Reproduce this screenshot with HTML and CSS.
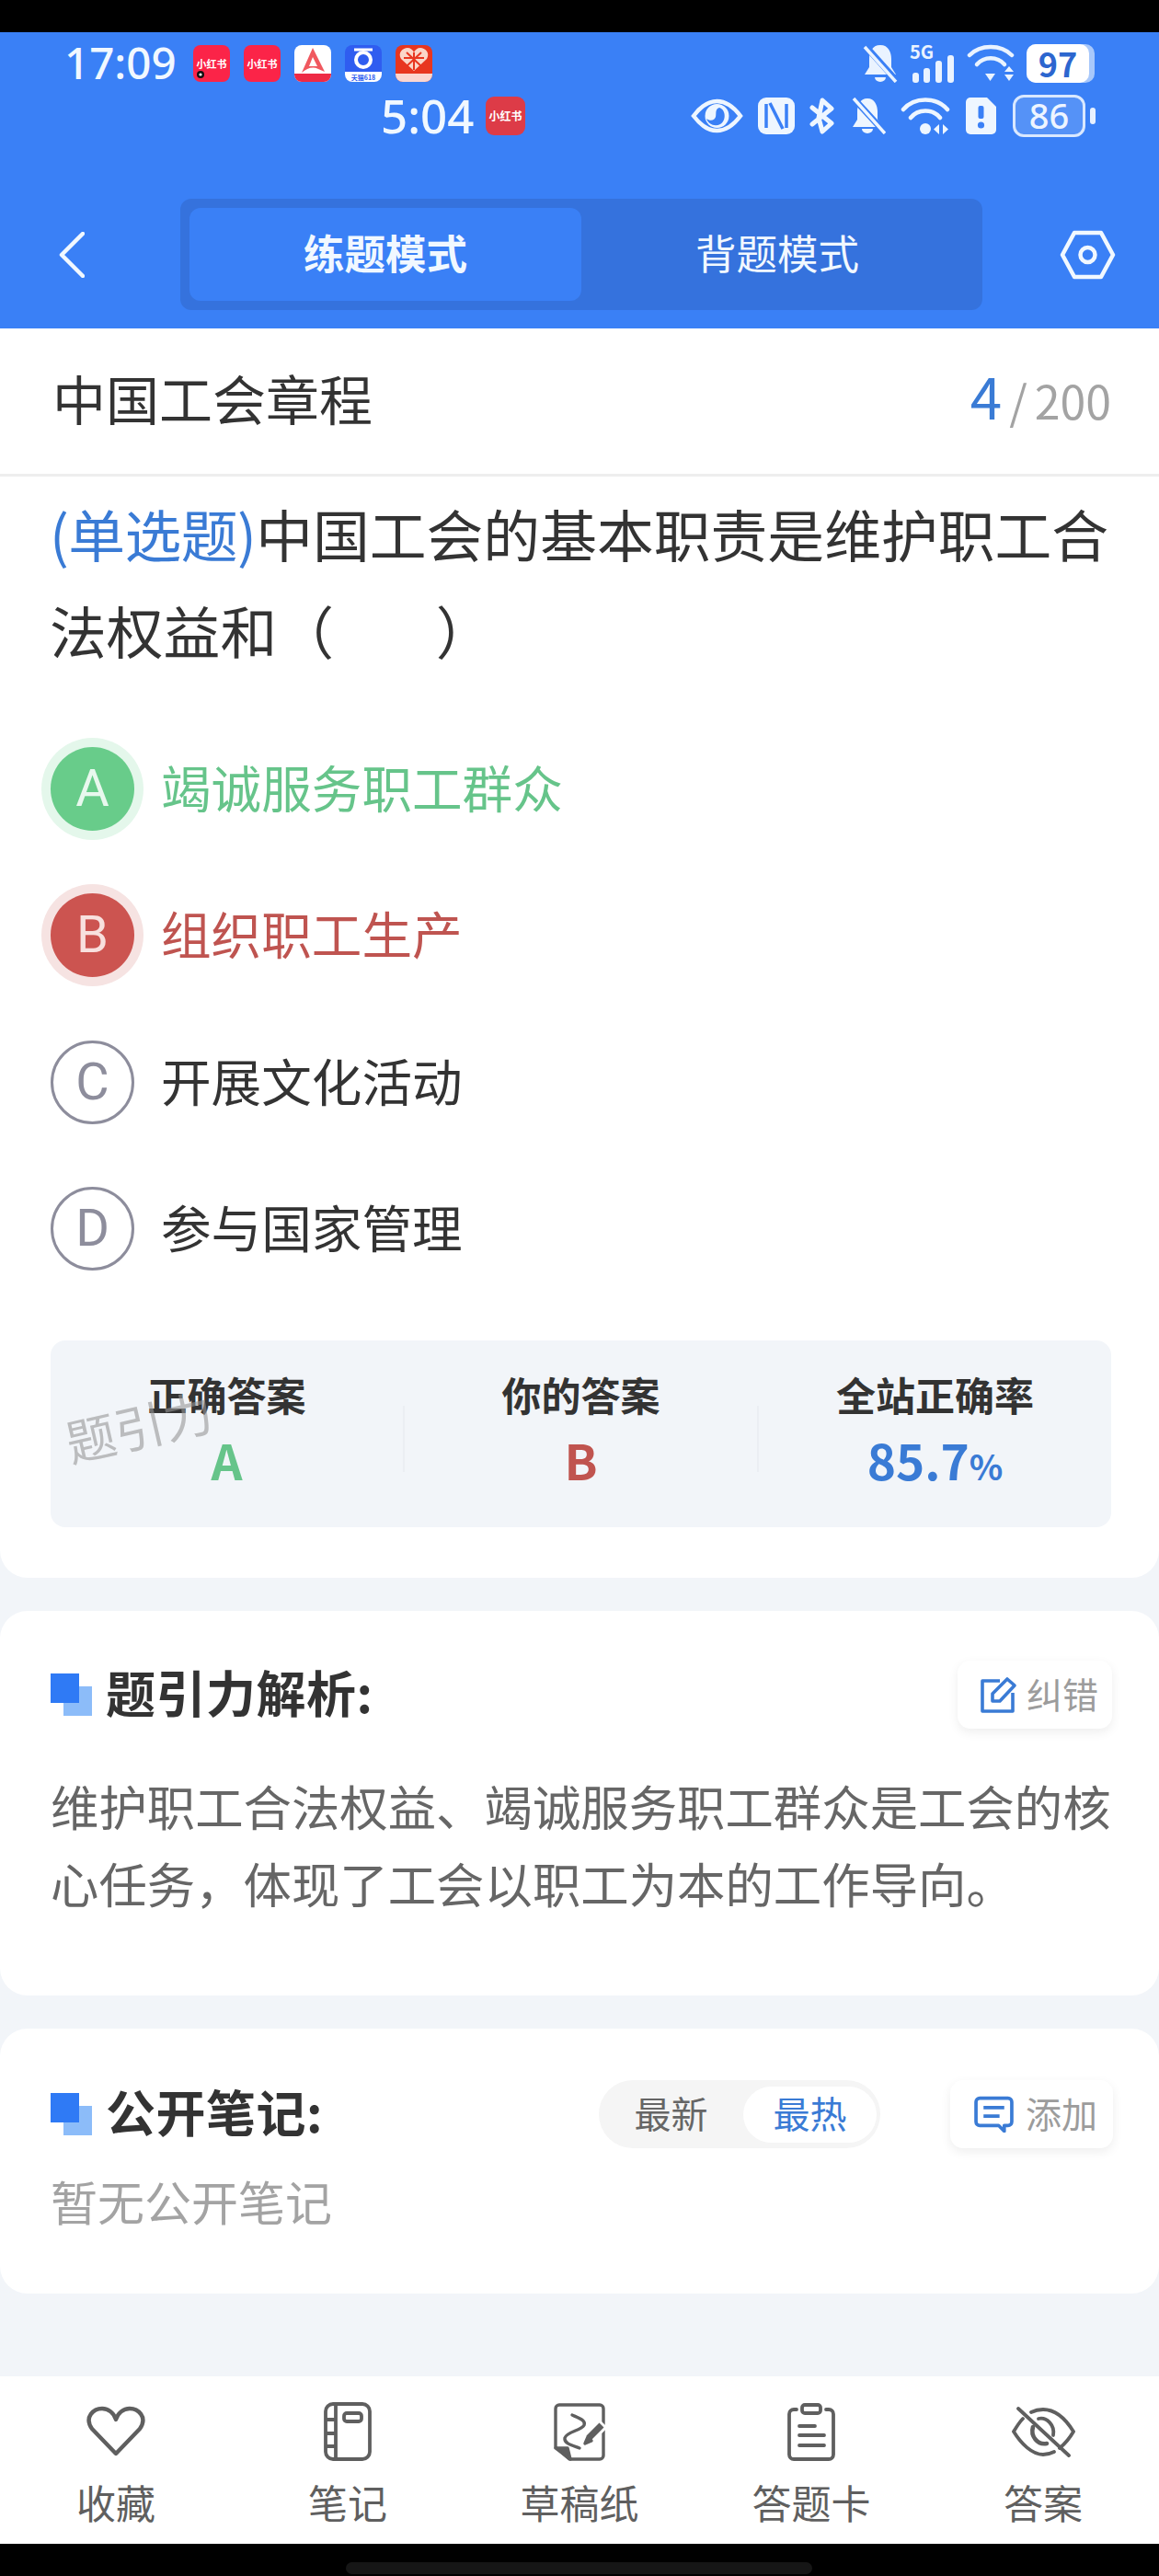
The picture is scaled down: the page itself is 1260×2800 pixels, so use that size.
FILE: index.html
```html
<!DOCTYPE html>
<html lang="zh-CN">
<head>
    <meta charset="UTF-8">
    <meta name="viewport" content="width=device-width, initial-scale=1.0">
    <title>练题模式 - 中国工会章程</title>
    <link rel="stylesheet" href="styles.css">
</head>
<body>
<div class="phone">
    <div class="black-top"></div>

    <header class="header">
        <div class="status status-one">
            <span class="time">17:09</span>
            <div class="apps">
                <svg class="app" viewBox="0 0 40 40"><rect width="40" height="40" rx="8" fill="#fb2448"/><text x="20" y="25" class="app-txt" text-anchor="middle">小红书</text><circle cx="8" cy="32" r="4" fill="#111"/><circle cx="8" cy="32" r="1.6" fill="#fff"/></svg>
                <svg class="app" viewBox="0 0 40 40"><rect width="40" height="40" rx="8" fill="#fb2448"/><text x="20" y="25" class="app-txt" text-anchor="middle">小红书</text></svg>
                <svg class="app" viewBox="0 0 40 40"><rect width="40" height="40" rx="8" fill="#fff"/><path d="M20 3 L33 29 L26 26 C20 23 14 25 8 30Z" fill="#f0585f"/><path d="M20 13 L25 23 L16 23Z" fill="#fff"/><path d="M0 31 H40 V32 A8 8 0 0 1 32 40 H8 A8 8 0 0 1 0 32Z" fill="#ee2a45"/></svg>
                <svg class="app" viewBox="0 0 40 40"><rect width="40" height="40" rx="8" fill="#2f5df0"/><circle cx="20" cy="16" r="8" fill="none" stroke="#fff" stroke-width="4"/><path d="M10 5 H30" stroke="#fff" stroke-width="3"/><path d="M0 29 H40 V32 A8 8 0 0 1 32 40 H8 A8 8 0 0 1 0 32Z" fill="#fff"/><text x="20" y="38" class="app-tiny" text-anchor="middle">天猫618</text></svg>
                <svg class="app" viewBox="0 0 40 40"><rect width="40" height="40" rx="8" fill="#e8361f"/><path d="M20 28 L6 15 C2 8 8 3 13 3 C16 3 19 5 20 8 C21 5 24 3 27 3 C32 3 38 8 34 15Z" fill="#fbd6c8"/><path d="M20 8 V27 M9 14 H31 M12 8 L28 23 M28 8 L12 23" stroke="#e8361f" stroke-width="2"/><path d="M0 31 H40 V32 A8 8 0 0 1 32 40 H8 A8 8 0 0 1 0 32Z" fill="#fbd6d0"/></svg>
            </div>
            <div class="sys-icons sys-one">
                <svg class="ic-bell" viewBox="0 0 38 42"><path d="M19 1 C10 1 7 9 7 16 V25 L2 33 H36 L31 25 V16 C31 9 28 1 19 1Z" fill="#eaf3ff"/><path d="M13 36 A6 5 0 0 0 25 36Z" fill="#eaf3ff"/><path d="M1 0 L37 40" stroke="#3a80f6" stroke-width="7"/><path d="M2 3 L36 41" stroke="#eaf3ff" stroke-width="3.5"/></svg>
                <div class="sig">
                    <span class="sig-txt">5G</span>
                    <svg class="ic-sig" viewBox="0 0 49 30"><rect x="3" y="19" width="7" height="11" rx="3" fill="#eaf3ff"/><rect x="15" y="14" width="7" height="16" rx="3" fill="#eaf3ff"/><rect x="28" y="6" width="7" height="24" rx="3" fill="#eaf3ff"/><rect x="41" y="0" width="7" height="30" rx="3" fill="#eaf3ff"/></svg>
                </div>
                <svg class="ic-wifi" viewBox="0 0 52 43" fill="none" stroke="#eaf3ff" stroke-width="4.5" stroke-linecap="round"><path d="M3 13 C15 1 37 1 49 13"/><path d="M11 23 C19 14 33 14 41 23"/><path d="M20 33 H31 L25.5 41Z" fill="#eaf3ff" stroke="none"/><path d="M41 31 L46 25 L51 31Z M41 34 H51 L46 41Z" fill="#eaf3ff" stroke="none"/></svg>
                <div class="batt-solid"><span class="batt-solid-num">97</span></div>
            </div>
        </div>
        <div class="status status-two">
            <span class="time-two">5:04</span>
            <svg class="app-two" viewBox="0 0 43 42"><rect width="43" height="42" rx="9" fill="#dd3b47"/><text x="21.5" y="26" class="app-txt app-txt-two" text-anchor="middle">小红书</text></svg>
            <div class="sys-icons sys-two">
                <svg class="ic-eye" viewBox="0 0 57 38"><path d="M3 19 C12 7 20 3 28.5 3 C37 3 45 7 54 19 C45 31 37 35 28.5 35 C20 35 12 31 3 19Z" fill="none" stroke="#eef6ff" stroke-width="4.5"/><circle cx="28.5" cy="19" r="13" fill="#eef6ff"/><path d="M31 10 C38 12 39 24 32 28 C26 31 19 28 17 22 C21 25 26 24 27 20 C28 16 26 12 31 10Z" fill="#3a80f6"/></svg>
                <svg class="ic-nfc" viewBox="0 0 40 40"><rect width="40" height="40" rx="9" fill="#eef6ff"/><path d="M9 7 V33 M31 7 V33 M13 6 L27 34" stroke="#3a80f6" stroke-width="3.5" fill="none"/></svg>
                <svg class="ic-bt" viewBox="0 0 28 40" fill="none" stroke="#eef6ff" stroke-width="5" stroke-linecap="round" stroke-linejoin="round"><path d="M3 11 L24 28 L14 37 L10 22 L14 3 L24 12 L3 29"/></svg>
                <svg class="ic-bell-two" viewBox="0 0 39 40"><path d="M19 1 C11 1 8 9 8 15 V24 L3 32 H35 L30 24 V15 C30 9 27 1 19 1Z" fill="#eef6ff"/><path d="M13 34 A6 5 0 0 0 25 34Z" fill="#eef6ff"/><path d="M3 0 L38 38" stroke="#3a80f6" stroke-width="7"/><path d="M4 1 L38 39" stroke="#eef6ff" stroke-width="3.5"/></svg>
                <svg class="ic-wifi-two" viewBox="0 0 55 42" fill="none" stroke="#eef6ff" stroke-width="4.5" stroke-linecap="round"><path d="M3 14 C15 0 39 0 51 14"/><path d="M11 23 C19 13 35 13 43 23"/><circle cx="27" cy="35" r="6" fill="#eef6ff" stroke="none"/><path d="M42 30 V41 L36 35.5Z M46 30 V41 L52 35.5Z" fill="#eef6ff" stroke="none"/></svg>
                <svg class="ic-sim" viewBox="0 0 33 40"><path d="M5 0 H23 L33 10 V35 A5 5 0 0 1 28 40 H5 A5 5 0 0 1 0 35 V5 A5 5 0 0 1 5 0Z" fill="#eef6ff"/><rect x="13.5" y="9" width="6" height="14" rx="2" fill="#3a80f6"/><circle cx="16.5" cy="30" r="3.6" fill="#3a80f6"/></svg>
                <div class="batt-line"><span class="batt-line-box">86</span><span class="batt-cap"></span></div>
            </div>
        </div>
        <nav class="nav">
            <svg class="back" viewBox="0 0 28 50" fill="none" stroke="#f1f8ff" stroke-width="4.5" stroke-linecap="round" stroke-linejoin="round"><path d="M26 2 L3 25 L26 48"/></svg>
            <div class="tabs">
                <div class="tab tab-on">练题模式</div>
                <div class="tab">背题模式</div>
            </div>
            <svg class="hex" viewBox="0 0 61 54" fill="none" stroke="#f1f8ff" stroke-width="4.5" stroke-linejoin="round"><path d="M16 3 H45 L58 27 L45 51 H16 L3 27Z"/><circle cx="30.5" cy="27" r="8"/></svg>
        </nav>
    </header>

    <section class="card card-main">
        <div class="title-row">
            <span class="title">中国工会章程</span>
            <span class="count"><b class="count-now">4</b><i class="count-sep">/</i>200</span>
        </div>
        <p class="question"><span class="q-type">(单选题)</span>中国工会的基本职责是维护职工合<br>法权益和（&nbsp;&nbsp;&nbsp;&nbsp;&nbsp;&nbsp;&nbsp;&nbsp;）</p>

        <ul class="options">
            <li class="option option-right"><span class="letter">A</span><span class="opt-text">竭诚服务职工群众</span></li>
            <li class="option option-wrong"><span class="letter">B</span><span class="opt-text">组织职工生产</span></li>
            <li class="option"><span class="letter">C</span><span class="opt-text">开展文化活动</span></li>
            <li class="option"><span class="letter">D</span><span class="opt-text">参与国家管理</span></li>
        </ul>

        <div class="answer-box">
            <div class="ans-col">
                <div class="ans-label">正确答案</div>
                <div class="ans-value ans-green">A</div>
            </div>
            <span class="ans-sep"></span>
            <div class="ans-col">
                <div class="ans-label">你的答案</div>
                <div class="ans-value ans-red">B</div>
            </div>
            <span class="ans-sep"></span>
            <div class="ans-col">
                <div class="ans-label">全站正确率</div>
                <div class="ans-value ans-blue">85.7<small class="pct">%</small></div>
            </div>
            <span class="watermark">题引力</span>
        </div>
    </section>

    <section class="card card-analysis">
        <div class="card-head">
            <span class="squares"><i class="sq-light"></i><i class="sq-dark"></i></span>
            <h3 class="card-title">题引力解析:</h3>
            <div class="mini-btn mini-right">
                <svg class="mini-ic" viewBox="0 0 40 40" fill="none" stroke="#3a7bd5" stroke-width="3.6" stroke-linejoin="round"><path d="M21 5 H2 V38 H35 V18"/><path d="M13 27 V19 L29 3 L37 10 L21 27Z"/></svg>
                <span class="mini-txt">纠错</span>
            </div>
        </div>
        <p class="analysis-txt">维护职工合法权益、竭诚服务职工群众是工会的核心任务，体现了工会以职工为本的工作导向。</p>
    </section>

    <section class="card card-notes">
        <div class="card-head">
            <span class="squares"><i class="sq-light"></i><i class="sq-dark"></i></span>
            <h3 class="card-title">公开笔记:</h3>
            <div class="toggle">
                <span class="toggle-item">最新</span>
                <span class="toggle-item toggle-on">最热</span>
            </div>
            <div class="mini-btn mini-add">
                <svg class="mini-ic mini-ic-wide" viewBox="0 0 42 38" fill="none" stroke="#3a7bd5" stroke-width="3.6" stroke-linejoin="round"><path d="M6 2 H36 A4 4 0 0 1 40 6 V27 A4 4 0 0 1 36 31 H32 V37 L26 31 H6 A4 4 0 0 1 2 27 V6 A4 4 0 0 1 6 2Z"/><path d="M10 12 H32 M10 21 H27"/></svg>
                <span class="mini-txt">添加</span>
            </div>
        </div>
        <p class="empty">暂无公开笔记</p>
    </section>

    <div class="spacer"></div>

    <footer class="tabbar">
        <div class="bar-item">
            <div class="bar-ic"><svg class="ic-heart" viewBox="0 0 64 56" fill="none" stroke="#5f5f5f" stroke-width="4.4" stroke-linejoin="round"><path d="M32 52 L6 25 C-3 12 8 3 17 3 C24 3 30 8 32 15 C34 8 40 3 47 3 C56 3 67 12 58 25Z"/></svg></div>
            <span class="bar-label">收藏</span>
        </div>
        <div class="bar-item">
            <div class="bar-ic"><svg class="ic-book" viewBox="0 0 52 64" fill="none" stroke="#5f5f5f" stroke-width="3.8"><rect x="2" y="2" width="48" height="60" rx="8"/><path d="M13 2 V62 M2 19 H13 M2 34 H13 M2 48 H13"/><rect x="22" y="12" width="19" height="9" rx="3"/></svg></div>
            <span class="bar-label">笔记</span>
        </div>
        <div class="bar-item">
            <div class="bar-ic"><svg class="ic-draft" viewBox="0 0 56 63" fill="none" stroke="#5f5f5f" stroke-width="3.4" stroke-linejoin="round" stroke-linecap="round"><path d="M2 48 V6 A4 4 0 0 1 6 2 H50 A4 4 0 0 1 54 6 V57 A4 4 0 0 1 50 61 H17Z"/><path d="M2 49 H15 L18 61Z" fill="#5f5f5f"/><path d="M20 13 C29 17 35 19 33 24 C30 30 14 31 12 38 C11 44 20 46 28 49"/><path d="M54 22 L36 40" stroke="#fff" stroke-width="13" stroke-linecap="butt"/><path d="M52 24 L38 38" stroke-width="7" stroke-linecap="butt"/><path d="M34 44 L37 37 L41 41Z" fill="#5f5f5f"/></svg></div>
            <span class="bar-label">草稿纸</span>
        </div>
        <div class="bar-item">
            <div class="bar-ic"><svg class="ic-card" viewBox="0 0 54 63" fill="none" stroke="#5f5f5f" stroke-width="3.8" stroke-linecap="round"><path d="M11 7 H8 A5 5 0 0 0 3 12 V56 A5 5 0 0 0 8 61 H46 A5 5 0 0 0 51 56 V12 A5 5 0 0 0 46 7 H43"/><rect x="17" y="2" width="20" height="9" rx="3"/><path d="M14 25 H31 M14 35 H41 M14 46 H41"/></svg></div>
            <span class="bar-label">答题卡</span>
        </div>
        <div class="bar-item">
            <div class="bar-ic"><svg class="ic-eyeoff" viewBox="0 0 69 55" fill="none" stroke="#5f5f5f" stroke-width="3.8" stroke-linecap="round"><path d="M21 6 C25 4 30 3 34 3 C48 3 59 14 67 27 C63 34 58 40 52 45"/><path d="M12 13 C8 17 5 22 2 27 C10 40 22 52 34 52 C38 52 42 51 46 49"/><path d="M7 2 L62 53"/><path d="M29 13 C38 11 47 20 45 31"/><path d="M23 22 C20 32 28 42 38 40" stroke-width="4.6"/></svg></div>
            <span class="bar-label">答案</span>
        </div>
    </footer>

    <div class="black-bottom"><span class="home-pill"></span></div>
</div>
</body>
</html>
```

FILE: styles.css
```css
* {
    box-sizing: border-box;
}
body {
    margin: 0;
    font-family: "Noto Sans CJK SC", "Noto Sans", sans-serif;
    color: #333;
}
p, h3, ul {
    margin: 0;
    padding: 0;
}
.phone {
    position: relative;
    width: 1260px;
    height: 2800px;
    display: flex;
    flex-direction: column;
    background-color: #f2f5f9;
    overflow: hidden;
}
.black-top {
    height: 35px;
    background-color: #000;
}

/* blue header */
.header {
    height: 322px;
    padding-top: 12px;
    background-color: #3a80f6;
    color: #f1f8ff;
}
.status {
    display: flex;
    align-items: center;
}
.status-one {
    height: 43px;
    padding: 0 70px;
}
.status-two {
    height: 46px;
    margin-top: 13px;
    padding: 0 69px 0 414px;
}
.time {
    font-family: "Noto Sans", sans-serif;
    font-size: 47.5px;
    font-weight: 500;
    line-height: 43px;
    width: 140px;
    margin-top: -3px;
}
.time-two {
    font-family: "Noto Sans", sans-serif;
    font-size: 51px;
    font-weight: 500;
    line-height: 46px;
    width: 114px;
    margin-top: -3px;
}
.apps {
    display: flex;
    gap: 15px;
}
.app {
    width: 40px;
    height: 40px;
}
.app-two {
    width: 43px;
    height: 42px;
}
.app-txt {
    font-size: 11px;
    font-weight: 700;
    fill: #fff;
}
.app-txt-two {
    font-size: 12px;
}
.app-tiny {
    font-size: 7px;
    font-weight: 700;
    fill: #2f5df0;
}
.sys-icons {
    margin-left: auto;
    display: flex;
    align-items: center;
}
.sys-one {
    gap: 13px;
}
.sys-two {
    gap: 16px;
}
.ic-bell {
    width: 38px;
    height: 42px;
}
.sig {
    width: 49px;
    height: 42px;
    display: flex;
    flex-direction: column;
}
.sig-txt {
    height: 16px;
    font-size: 20px;
    font-weight: 700;
    line-height: 16px;
    color: #eaf3ff;
}
.ic-sig {
    width: 49px;
    height: 30px;
    margin-top: -4px;
}
.ic-wifi {
    width: 52px;
    height: 43px;
}
.batt-solid {
    width: 74px;
    height: 42px;
    border-radius: 10px;
    background-color: #a8c8fb;
}
.batt-solid-num {
    display: block;
    width: 68px;
    height: 42px;
    border-radius: 10px;
    background-color: #fff;
    color: #2c66cf;
    font-size: 36px;
    font-weight: 700;
    line-height: 41px;
    text-align: center;
}
.ic-eye {
    width: 57px;
    height: 38px;
}
.ic-nfc {
    width: 40px;
    height: 40px;
}
.ic-bt {
    width: 28px;
    height: 40px;
}
.ic-bell-two {
    width: 39px;
    height: 40px;
}
.ic-wifi-two {
    width: 55px;
    height: 42px;
}
.ic-sim {
    width: 33px;
    height: 40px;
}
.batt-line {
    display: flex;
    align-items: center;
    gap: 5px;
    margin-left: 2px;
}
.batt-line-box {
    width: 79px;
    height: 46px;
    border: 3px solid #d9e8ff;
    border-radius: 12px;
    background-color: rgba(255, 255, 255, 0.14);
    color: #eef5ff;
    font-family: "Noto Sans", sans-serif;
    font-size: 38px;
    font-weight: 500;
    line-height: 38px;
    text-align: center;
}
.batt-cap {
    width: 6px;
    height: 18px;
    border-radius: 3px;
    background-color: #e8f1ff;
}
.nav {
    display: flex;
    align-items: center;
    margin-top: 67px;
    padding-left: 64px;
}
.back {
    width: 28px;
    height: 50px;
}
.tabs {
    width: 872px;
    height: 121px;
    margin-left: 104px;
    padding: 10px;
    display: flex;
    border-radius: 12px;
    background-color: #3572dd;
}
.tab {
    flex: 1;
    border-radius: 12px;
    font-size: 44.5px;
    line-height: 96px;
    text-align: center;
}
.tab-on {
    background-color: #3a80f6;
    font-weight: 700;
}
.hex {
    width: 61px;
    height: 54px;
    margin-left: 84px;
}

/* cards */
.card {
    background-color: #fff;
    border-radius: 30px;
}
.card-main {
    height: 1358px;
    border-radius: 0 0 30px 30px;
}
.title-row {
    height: 161px;
    padding: 0 52px 9px 57px;
    display: flex;
    align-items: center;
    justify-content: space-between;
    border-bottom: 3px solid #eeeeee;
}
.title {
    font-size: 58px;
}
.count {
    color: #a3a3a3;
    font-size: 50px;
    line-height: 70px;
}
.count-now {
    color: #3a7bd5;
    font-size: 62px;
    font-weight: 400;
}
.count-sep {
    margin: 0 8px;
    font-style: normal;
}
.question {
    margin-top: 9px;
    padding-left: 54px;
    font-size: 61.8px;
    line-height: 105px;
    white-space: nowrap;
}
.q-type {
    color: #3a7bd5;
    letter-spacing: -0.6px;
}
.options {
    margin-top: 41px;
    list-style: none;
}
.option {
    height: 159.3px;
    padding-left: 55px;
    display: flex;
    align-items: center;
    gap: 29px;
    font-size: 54.6px;
}
.opt-text {
    margin-top: -6px;
}
.letter {
    width: 91px;
    height: 91px;
    flex-shrink: 0;
    border: 3px solid #8d8d9c;
    border-radius: 50%;
    color: #8d8d9c;
    font-family: "Roboto", sans-serif;
    font-size: 56px;
    font-weight: 400;
    line-height: 85px;
    text-align: center;
}
.option-right {
    color: #66c48a;
}
.option-right .letter {
    border: none;
    line-height: 91px;
    background-color: #68cc8a;
    color: #e8f8ee;
    box-shadow: 0 0 0 10px #e4f7eb;
}
.option-wrong {
    color: #bf5450;
}
.option-wrong .letter {
    border: none;
    line-height: 91px;
    background-color: #cc5450;
    color: #f8e0de;
    box-shadow: 0 0 0 10px #f6e3e2;
}
.answer-box {
    position: relative;
    width: 1153px;
    height: 203px;
    margin: 42px 0 0 55px;
    display: flex;
    align-items: center;
    border-radius: 16px;
    background-color: #f2f5f9;
}
.ans-col {
    flex: 1;
    text-align: center;
    height: 203px;
    padding-top: 28px;
}
.ans-sep {
    width: 2px;
    height: 72px;
    margin-top: 10px;
    background-color: #ebeef3;
}
.ans-label {
    font-size: 43px;
    font-weight: 700;
    line-height: 60px;
}
.ans-value {
    margin-top: 6px;
    font-size: 53px;
    font-weight: 700;
    line-height: 70px;
}
.ans-green {
    color: #66c48a;
}
.ans-red {
    color: #c0544f;
}
.ans-blue {
    color: #3a7bd5;
}
.pct {
    font-size: 38px;
}
.watermark {
    position: absolute;
    left: 15px;
    top: 57px;
    color: rgba(150, 150, 150, 0.6);
    font-size: 54px;
    line-height: 70px;
    transform: rotate(-13deg);
}
.card-analysis {
    height: 418px;
    margin-top: 36px;
    padding: 54px 51px 0 55px;
}
.card-notes {
    height: 288px;
    margin-top: 36px;
    padding: 56px 50px 0 55px;
}
.card-head {
    height: 74px;
    display: flex;
    align-items: center;
}
.squares {
    position: relative;
    width: 45px;
    height: 46px;
    flex-shrink: 0;
}
.sq-dark, .sq-light {
    position: absolute;
    width: 31px;
    height: 32px;
}
.sq-dark {
    left: 0;
    top: 0;
    background-color: #2f7af5;
}
.sq-light {
    left: 14px;
    top: 14px;
    background-color: #8cbcf9;
}
.card-title {
    margin-left: 15px;
    font-size: 54px;
    font-weight: 700;
    line-height: 68px;
    margin-bottom: 6px;
    letter-spacing: 0.5px;
}
.mini-btn {
    display: flex;
    align-items: center;
    gap: 10px;
    height: 74px;
    border-radius: 14px;
    background-color: #fff;
    box-shadow: 0 4px 12px rgba(0, 0, 0, 0.07);
    color: #9c9c9c;
    font-size: 39px;
}
.mini-txt {
    margin-top: -5px;
}
.mini-right {
    margin-left: auto;
    width: 168px;
    padding-left: 25px;
}
.mini-ic {
    width: 40px;
    height: 40px;
    flex-shrink: 0;
}
.mini-ic-wide {
    width: 43px;
}
.mini-add {
    width: 177px;
    margin-left: 76px;
    padding-left: 26px;
    gap: 13px;
}
.analysis-txt {
    margin-top: 41px;
    color: #666;
    font-size: 52.4px;
    line-height: 84px;
}
.toggle {
    margin-left: auto;
    width: 306px;
    height: 74px;
    padding: 7px 4px 6px 0;
    display: flex;
    border-radius: 37px;
    background-color: #f5f5f5;
    font-size: 40px;
}
.toggle-item {
    flex: 1;
    border-radius: 31px;
    color: #666;
    line-height: 57px;
    text-align: center;
}
.toggle-on {
    flex: none;
    width: 145px;
    background-color: #fff;
    color: #3a7bd5;
}
.empty {
    margin-top: 22px;
    color: #a3a3a3;
    font-size: 51px;
    line-height: 70px;
}

.spacer {
    flex: 1;
}

/* bottom bar */
.tabbar {
    height: 182px;
    display: flex;
    background-color: #fff;
}
.bar-item {
    flex: 1;
    padding-top: 28px;
    display: flex;
    flex-direction: column;
    align-items: center;
}
.bar-ic {
    height: 64px;
    display: flex;
    align-items: center;
}
.bar-label {
    margin-top: 16px;
    color: #5f5f5f;
    font-size: 43px;
    line-height: 56px;
}
.ic-heart {
    width: 64px;
    height: 56px;
}
.ic-book {
    width: 52px;
    height: 64px;
}
.ic-draft {
    width: 56px;
    height: 63px;
}
.ic-card {
    width: 54px;
    height: 63px;
}
.ic-eyeoff {
    width: 69px;
    height: 55px;
}
.black-bottom {
    height: 35px;
    padding: 20px 0 0 376px;
    background-color: #000;
}
.home-pill {
    display: block;
    width: 507px;
    height: 13px;
    border-radius: 7px;
    background-color: #161616;
}
```
